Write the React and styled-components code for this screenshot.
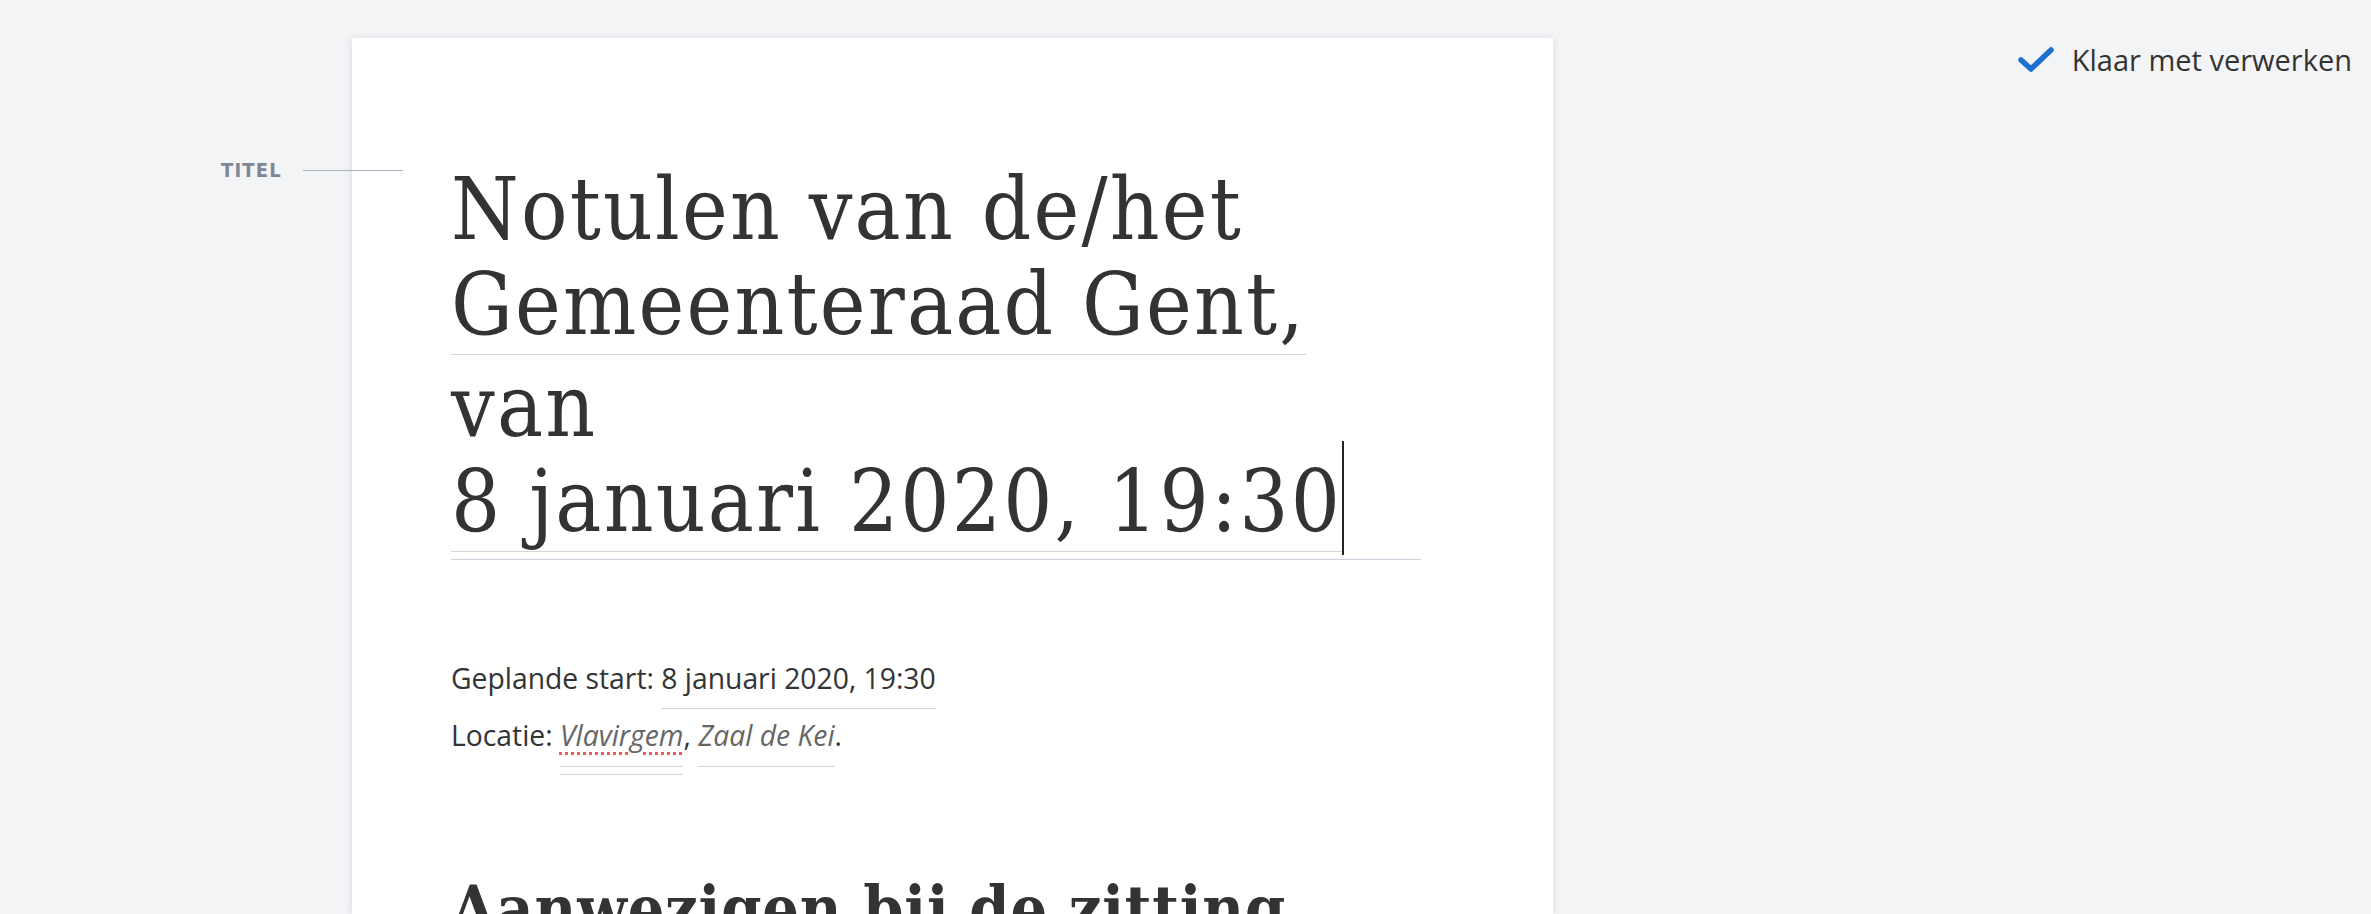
import React from 'react';
import styled, { createGlobalStyle } from 'styled-components';

const GlobalStyle = createGlobalStyle`
  html, body {
    margin: 0;
    padding: 0;
    background: #f3f4f6;
  }
  body {
    font-family: "Open Sans", "Noto Sans", sans-serif;
    color: #333;
  }
`;

const Screen = styled.div`
  display: flex;
  height: 914px;
  overflow: hidden;
  background: #f3f4f6;
`;

const Gutter = styled.div`
  width: 352px;
  flex-shrink: 0;
`;

const Paper = styled.article`
  width: 1201px;
  flex-shrink: 0;
  margin-top: 38px;
  padding: 124px 132px 0 99px;
  box-sizing: border-box;
  background: #fff;
  box-shadow: 0 1px 8px rgba(30, 40, 60, 0.13);
`;

const Side = styled.aside`
  flex: 1;
  display: flex;
  justify-content: flex-end;
  align-items: flex-start;
  padding: 40px 19px 0 0;
`;

const DoneButton = styled.button`
  display: flex;
  align-items: center;
  gap: 18px;
  background: none;
  border: none;
  padding: 0;
  font-family: "Open Sans", "Noto Sans", sans-serif;
  font-size: 29px;
  color: #333;
  cursor: pointer;
`;

const Title = styled.h1`
  position: relative;
  margin: 0;
  padding-bottom: 7px;
  font-family: "DejaVu Serif Condensed", "DejaVu Serif", serif;
  font-stretch: condensed;
  font-weight: 400;
  font-size: 86px;
  letter-spacing: 2.2px;
  line-height: 95px;
  color: #333;
  border-bottom: 1px solid #cfd2de;
`;

const Annotated = styled.span`
  display: inline-block;
  padding-bottom: 2px;
  margin-bottom: ${({ $gap }) => $gap || 0}px;
  border-bottom: 1px solid #d3d7dc;
`;

const Caret = styled.span`
  display: inline-block;
  width: 2px;
  height: 114px;
  margin: -15px 0 -24px 0;
  background: #222;
`;

const FieldLabel = styled.div`
  position: absolute;
  right: calc(100% + 48px);
  top: -2px;
  display: flex;
  align-items: center;
  gap: 21px;
  font-family: "DejaVu Sans", sans-serif;
  font-size: 20px;
  font-weight: 700;
  letter-spacing: 1.2px;
  color: #7f8694;
  line-height: 20px;
`;

const LabelLine = styled.span`
  width: 100px;
  height: 1px;
  background: #a9b4c2;
`;

const Meta = styled.p`
  margin: 90px 0 0;
  font-size: 28.3px;
  line-height: 57px;
  color: #333;
`;

const Linked = styled.span`
  padding-bottom: ${({ $pad }) => $pad}px;
  border-bottom: 1px solid #d3d7dc;
  font-style: ${({ $italic }) => ($italic ? 'italic' : 'normal')};
  color: ${({ $italic }) => ($italic ? '#666' : '#333')};
`;

const Misspelled = styled.span`
  text-decoration: underline dotted #f05a5a;
  text-decoration-thickness: 3px;
  text-underline-offset: 6px;
`;

const Heading = styled.h2`
  margin: 110px 0 0;
  font-family: "DejaVu Serif Condensed", "DejaVu Serif", serif;
  font-stretch: condensed;
  font-weight: 700;
  font-size: 64px;
  letter-spacing: 0.8px;
  line-height: 70px;
  color: #333;
`;

const CheckIcon = () => (
  <svg width="36" height="26" viewBox="0 0 36 26">
    <polyline points="3,13 13,22 33,3" fill="none" stroke="#1f6fd0" strokeWidth="5.5" strokeLinecap="round" strokeLinejoin="round" />
  </svg>
);

export default function App() {
  return (
    <>
      <GlobalStyle />
      <Screen>
        <Gutter />
        <Paper>
          <Title>
            <FieldLabel>
              TITEL
              <LabelLine />
            </FieldLabel>
            <Annotated $gap={4}>
              Notulen van de/het
              <br />
              Gemeenteraad Gent,
            </Annotated>
            <br />
            van
            <br />
            <Annotated>8 januari 2020, 19:30</Annotated>
            <Caret />
          </Title>
          <Meta>
            Geplande start: <Linked $pad={11}>8 januari 2020, 19:30</Linked>
            <br />
            Locatie:{' '}
            <Linked $pad={20}>
              <Linked $pad={12} $italic>
                <Misspelled>Vlavirgem</Misspelled>
              </Linked>
            </Linked>
            ,{' '}
            <Linked $pad={12} $italic>Zaal de Kei</Linked>.
          </Meta>
          <Heading>Aanwezigen bij de zitting</Heading>
        </Paper>
        <Side>
          <DoneButton>
            <CheckIcon />
            Klaar met verwerken
          </DoneButton>
        </Side>
      </Screen>
    </>
  );
}
